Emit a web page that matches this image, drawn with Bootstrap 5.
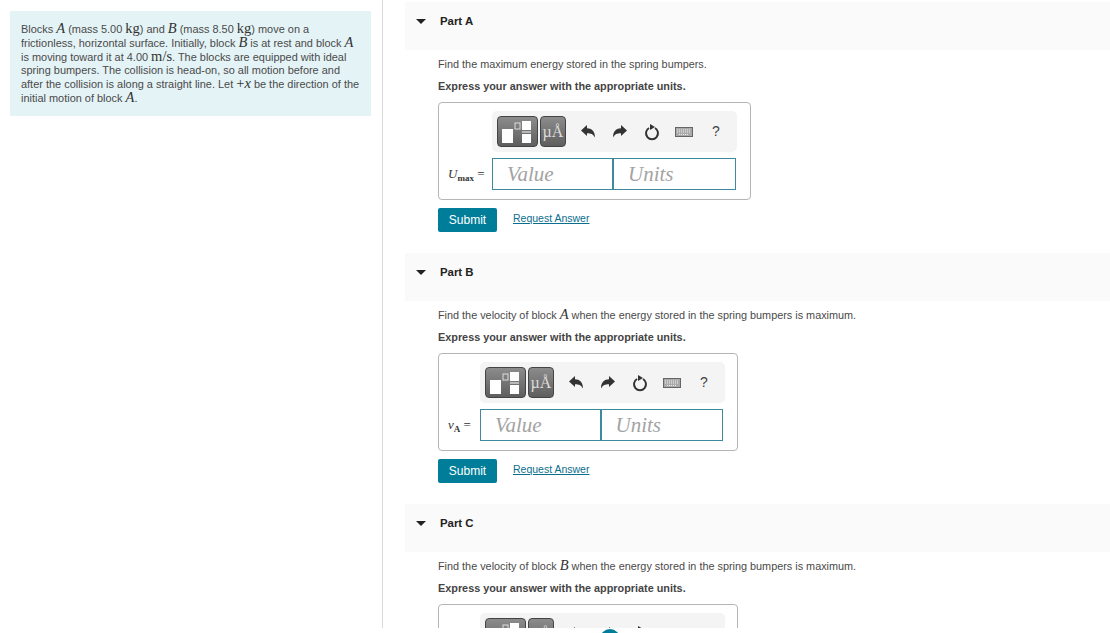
<!DOCTYPE html>
<html lang="en">
<head>
<meta charset="utf-8">
<title>Spring bumpers</title>
<link href="https://cdn.jsdelivr.net/npm/bootstrap@5.3.0/dist/css/bootstrap.min.css" rel="stylesheet">
<style>
html,body{height:633px;overflow:hidden;background:#fff}
body{font-family:"Liberation Sans",Arial,sans-serif;color:#4a4a4a;font-size:10.85px;position:relative}
.shell{height:628px;overflow:hidden}
.leftcol{width:383px;flex:none;border-right:1px solid #d9d9d9;padding:11px 11px 0 10px}
.intro{background:#e4f3f6;height:105px;padding:12px 10px 0 11px;line-height:13.8px;font-size:10.95px}
.mth{font-family:"Liberation Serif",serif;font-size:14.5px;line-height:10px;color:#333}
.mi{font-style:italic}
.rightcol{flex:1 1 auto;min-width:0;padding:2px 0 0 22px}
.parthdr{height:48px;background:#fafafa;padding:12px 0 0 11px;color:#222;font-weight:700;font-size:11.4px;line-height:14px;gap:14px}
.caret{width:0;height:0;border-left:5px solid transparent;border-right:5px solid transparent;border-top:5px solid #222;margin-top:5px}
.partbody{height:203px;padding:7px 0 0 33px}
.q1{height:14px;line-height:14px;margin:0 0 8px}
.ex{font-weight:700;color:#444;height:14px;line-height:14px;margin-bottom:9px}
.ansbox{border:1px solid #b5b5b5;border-radius:4px;background:#fff;height:98px;padding:8px 14px 0 9px}
.wA{width:313px}.wB{width:300px}
.tb{height:41px;background:#f4f4f4;border-radius:5px;padding:4px 5px;margin-left:44px;width:245px;gap:2px}
.wB .tb{margin-left:32px}
.tbtn{height:31px;border:1px solid #444;border-radius:4px;background:linear-gradient(#8c8c8c,#5e5e5e);color:#ddd;display:flex;align-items:center;justify-content:center}
.t1{width:44px}.t2{width:28px;font-family:"Liberation Serif",serif;font-size:16px}
.ico{width:32px;display:flex;align-items:center;justify-content:center;color:#444;font-size:14px;height:31px}
.tools{margin-left:4px}
.fldrow{margin-top:6px}
.lbl{width:44px;flex:none;font-family:"Liberation Serif",serif;font-size:13px;color:#333;white-space:nowrap}
.wB .lbl{width:32px}
.lbl sub{font-size:9px;font-weight:700;bottom:-.25em}
.fld{width:121px;height:32px;border:1px solid #3d8a9c;font-family:"Liberation Serif",serif;font-style:italic;font-size:21px;color:#a3a3a3;padding-left:14px;line-height:30px;background:#fff}
.fld+.fld{width:123px}
.acts{margin-top:8px;gap:16px}
.sbtn{background:#007d99;color:#fff;border:0;border-radius:2px;width:59px;height:24px;font-size:12px;padding:0;font-family:inherit}
.rlink{color:#0b6e8c;font-size:10.5px;text-decoration:underline;margin-bottom:2px}
.dot{position:absolute;left:600px;top:629px;width:20px;height:20px;border-radius:50%;background:#007d99}
</style>
</head>
<body>
<svg width="0" height="0" class="d-none">
  <symbol id="i-tpl" viewBox="0 0 30 22"><rect x="0" y="8" width="11" height="14" fill="#fff"/><rect x="13" y="2" width="5" height="6" fill="none" stroke="#ddd"/><rect x="20" y="0" width="9" height="9" fill="#fff"/><rect x="20" y="10.500" width="9" height="1" fill="#fff"/><rect x="20" y="13" width="9" height="9" fill="#fff"/></symbol>
  <symbol id="i-undo" viewBox="0 0 14 13"><path d="M0 5.500 6 0v3.200c4.500 0 8 2.800 8 9.300-1.800-3.400-4-4.300-8-4.300V11z" fill="#333"/></symbol>
  <symbol id="i-redo" viewBox="0 0 14 13"><path d="M14 5.500 8 0v3.200c-4.500 0-8 2.800-8 9.300 1.800-3.400 4-4.300 8-4.300V11z" fill="#333"/></symbol>
  <symbol id="i-reset" viewBox="0 0 16 18"><path d="M5 5a6 6 0 1 0 6 0" fill="none" stroke="#333" stroke-width="2"/><path d="M6 1l5 3-5 3z" fill="#333"/></symbol>
  <symbol id="i-kbd" viewBox="0 0 18 10"><rect x=".5" y=".5" width="17" height="9" fill="#aaa" stroke="#666"/><path d="M2 3h14M2 5h14M4 7.500h10" stroke="#eee" stroke-dasharray="1 1"/></symbol>
</svg>
<div class="shell d-flex">
  <div class="leftcol">
    <div class="intro">Blocks <span class="mth mi">A</span> (mass 5.00 <span class="mth">kg</span>) and <span class="mth mi">B</span> (mass 8.50 <span class="mth">kg</span>) move on a<br>frictionless, horizontal surface. Initially, block <span class="mth mi">B</span> is at rest and block <span class="mth mi">A</span><br>is moving toward it at 4.00 <span class="mth">m/s</span>. The blocks are equipped with ideal<br>spring bumpers. The collision is head-on, so all motion before and<br>after the collision is along a straight line. Let <span class="mth">+<span class="mi">x</span></span> be the direction of the<br>initial motion of block <span class="mth mi">A</span>.</div>
  </div>
  <div class="rightcol">

    <div class="parthdr d-flex"><span class="caret"></span><span>Part A</span></div>
    <div class="partbody">
      <div class="q1">Find the maximum energy stored in the spring bumpers.</div>
      <div class="ex">Express your answer with the appropriate units.</div>
      <div class="ansbox wA">
        <div class="tb d-flex align-items-center">
          <div class="tbtn t1"><svg width="30" height="22"><use href="#i-tpl"/></svg></div>
          <div class="tbtn t2">µÅ</div>
          <div class="tools d-flex">
            <div class="ico"><svg width="14" height="13"><use href="#i-undo"/></svg></div>
            <div class="ico"><svg width="14" height="13"><use href="#i-redo"/></svg></div>
            <div class="ico"><svg width="16" height="18"><use href="#i-reset"/></svg></div>
            <div class="ico"><svg width="18" height="10"><use href="#i-kbd"/></svg></div>
            <div class="ico">?</div>
          </div>
        </div>
        <div class="fldrow d-flex align-items-center">
          <div class="lbl"><span class="mi">U</span><sub>max</sub> =</div>
          <div class="fld">Value</div><div class="fld">Units</div>
        </div>
      </div>
      <div class="acts d-flex align-items-center"><button class="sbtn" type="button">Submit</button><a class="rlink" href="#">Request Answer</a></div>
    </div>

    <div class="parthdr d-flex"><span class="caret"></span><span>Part B</span></div>
    <div class="partbody">
      <div class="q1">Find the velocity of block <span class="mth mi">A</span> when the energy stored in the spring bumpers is maximum.</div>
      <div class="ex">Express your answer with the appropriate units.</div>
      <div class="ansbox wB">
        <div class="tb d-flex align-items-center">
          <div class="tbtn t1"><svg width="30" height="22"><use href="#i-tpl"/></svg></div>
          <div class="tbtn t2">µÅ</div>
          <div class="tools d-flex">
            <div class="ico"><svg width="14" height="13"><use href="#i-undo"/></svg></div>
            <div class="ico"><svg width="14" height="13"><use href="#i-redo"/></svg></div>
            <div class="ico"><svg width="16" height="18"><use href="#i-reset"/></svg></div>
            <div class="ico"><svg width="18" height="10"><use href="#i-kbd"/></svg></div>
            <div class="ico">?</div>
          </div>
        </div>
        <div class="fldrow d-flex align-items-center">
          <div class="lbl"><span class="mi">v</span><sub>A</sub> =</div>
          <div class="fld">Value</div><div class="fld">Units</div>
        </div>
      </div>
      <div class="acts d-flex align-items-center"><button class="sbtn" type="button">Submit</button><a class="rlink" href="#">Request Answer</a></div>
    </div>

    <div class="parthdr d-flex"><span class="caret"></span><span>Part C</span></div>
    <div class="partbody">
      <div class="q1">Find the velocity of block <span class="mth mi">B</span> when the energy stored in the spring bumpers is maximum.</div>
      <div class="ex">Express your answer with the appropriate units.</div>
      <div class="ansbox wB">
        <div class="tb d-flex align-items-center">
          <div class="tbtn t1"><svg width="30" height="22"><use href="#i-tpl"/></svg></div>
          <div class="tbtn t2">µÅ</div>
          <div class="tools d-flex">
            <div class="ico"><svg width="14" height="13"><use href="#i-undo"/></svg></div>
            <div class="ico"><svg width="14" height="13"><use href="#i-redo"/></svg></div>
            <div class="ico"><svg width="16" height="18"><use href="#i-reset"/></svg></div>
            <div class="ico"><svg width="18" height="10"><use href="#i-kbd"/></svg></div>
            <div class="ico">?</div>
          </div>
        </div>
      </div>
    </div>
  </div>
</div>
<div class="dot"></div>
<script src="https://cdn.jsdelivr.net/npm/bootstrap@5.3.0/dist/js/bootstrap.bundle.min.js"></script>
</body>
</html>
